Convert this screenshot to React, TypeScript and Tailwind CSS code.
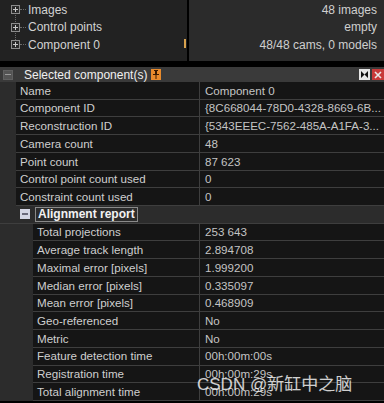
import React from 'react';

const font = { fontFamily: '"Liberation Sans", Arial, sans-serif' };

const topRows = [
  { label: 'Images', value: '48 images' },
  { label: 'Control points', value: 'empty' },
  { label: 'Component 0', value: '48/48 cams, 0 models' },
];

const mainRows = [
  ['Name', 'Component 0'],
  ['Component ID', '{8C668044-78D0-4328-8669-6B...'],
  ['Reconstruction ID', '{5343EEEC-7562-485A-A1FA-3...'],
  ['Camera count', '48'],
  ['Point count', '87 623'],
  ['Control point count used', '0'],
  ['Constraint count used', '0'],
];

const reportRows = [
  ['Total projections', '253 643'],
  ['Average track length', '2.894708'],
  ['Maximal error [pixels]', '1.999200'],
  ['Median error [pixels]', '0.335097'],
  ['Mean error [pixels]', '0.468909'],
  ['Geo-referenced', 'No'],
  ['Metric', 'No'],
  ['Feature detection time', '00h:00m:00s'],
  ['Registration time', '00h:00m:29s'],
  ['Total alignment time', '00h:00m:29s'],
];

const PlusBox = () => (
  <div className="w-[9px] h-[9px] border border-[#8c8c8c] bg-[#2a2a2a] flex items-center justify-center relative">
    <div className="absolute w-[5px] h-[1px] bg-[#c8c8c8]" />
    <div className="absolute w-[1px] h-[5px] bg-[#c8c8c8]" />
  </div>
);

const Row = ({ label, value, indent }: { label: string; value: string; indent: boolean }) => (
  <div className="flex h-[17.73px] bg-[#2c2c2c]">
    <div className={`${indent ? 'w-[33px]' : 'w-[16px]'} shrink-0`} />
    <div className="flex-1 flex border-b border-[#3e3e3e] bg-[#151515]">
      <div className={`${indent ? 'w-[166px] pl-[4px]' : 'w-[183px] pl-[4px]'} shrink-0 flex items-center text-[11.6px] text-[#cfcfcf] whitespace-nowrap overflow-hidden`}>
        {label}
      </div>
      <div className="flex-1 flex items-center border-l border-[#3e3e3e] pl-[5px] text-[11.6px] text-[#c4c4c4] whitespace-nowrap overflow-hidden">
        {value}
      </div>
    </div>
  </div>
);

export default function App() {
  return (
    <div className="w-[384px] h-[403px] bg-black overflow-hidden relative" style={font}>
      {/* tree panel */}
      <div className="flex h-[61px]">
        <div className="w-[187px] bg-[#222222] pt-[1px] relative">
          <div className="absolute left-[15px] top-[10px] h-[36px] border-l border-dotted border-[#6a6a6a]" />
          {topRows.map((r) => (
            <div key={r.label} className="flex items-center h-[17.5px] pl-[11px] relative">
              <PlusBox />
              <div className="w-[6px] border-t border-dotted border-[#6a6a6a] mr-[2px]" />
              <span className="text-[12px] text-[#d2d2d2]">{r.label}</span>
            </div>
          ))}
          <div className="absolute left-[184px] top-[39px] w-[2px] h-[9px] bg-[#d8a24e]" />
        </div>
        <div className="w-[2px] bg-black" />
        <div className="flex-1 bg-[#2b2b2b] pt-[1px] pr-[7px]">
          {topRows.map((r) => (
            <div key={r.value} className="h-[17.5px] flex items-center justify-end text-[12px] text-[#cfcfcf]">
              {r.value}
            </div>
          ))}
        </div>
      </div>
      <div className="h-[6px] bg-black" />

      {/* header */}
      <div className="h-[15px] bg-[#3a3a3a] flex items-center">
        <div className="ml-[3px] w-[10px] h-[10px] bg-[#545454] border border-[#606060] flex items-center justify-center">
          <div className="w-[6px] h-[1px] bg-[#9a9a9a]" />
        </div>
        <span className="ml-[11px] text-[12px] text-[#f0f0f0]">Selected component(s)</span>
        <div className="ml-[4px] w-[10px] h-[11px] bg-[#e88a2c] flex items-center justify-center">
          <svg width="8" height="9" viewBox="0 0 8 9">
            <rect x="2" y="0" width="4" height="1" fill="#3a1a00" />
            <rect x="3" y="1" width="2" height="3" fill="#3a1a00" />
            <rect x="1" y="4" width="6" height="1" fill="#3a1a00" />
            <rect x="3.5" y="5" width="1" height="4" fill="#3a1a00" />
          </svg>
        </div>
        <div className="flex-1" />
        <div className="w-[11px] h-[11px] bg-[#e6e6e6] flex items-center justify-center">
          <svg width="9" height="9" viewBox="0 0 9 9">
            <path d="M1 1 L4.5 4.5 L1 8 Z M8 1 L4.5 4.5 L8 8 Z" fill="#111" />
          </svg>
        </div>
        <div className="ml-[2px] w-[12px] h-[11px] bg-[#c83a3a] flex items-center justify-center">
          <svg width="8" height="8" viewBox="0 0 8 8">
            <path d="M1 1 L7 7 M7 1 L1 7" stroke="#e8e8e8" strokeWidth="1.6" />
          </svg>
        </div>
      </div>

      {/* property grid */}
      <div className="bg-[#2c2c2c]">
        {mainRows.map(([l, v]) => (
          <Row key={l} label={l} value={v} indent={false} />
        ))}
        <div className="flex items-center h-[17.73px] bg-[#2c2c2c] border-b border-[#3e3e3e]">
          <div className="ml-[20px] w-[10px] h-[10px] bg-[#d4d6e4] flex items-center justify-center">
            <div className="w-[6px] h-[2px] bg-[#6a6a7a]" />
          </div>
          <div className="ml-[5px] px-[2px] h-[15px] border border-[#8a8a8a] flex items-center text-[12px] font-bold text-[#f2f2f2]">
            Alignment report
          </div>
        </div>
        {reportRows.map(([l, v]) => (
          <Row key={l} label={l} value={v} indent={true} />
        ))}
      </div>

      {/* watermark */}
      <div
        className="absolute left-[197px] top-[372px] text-[17px] text-white/80 whitespace-nowrap"
        style={{ fontFamily: '"Liberation Sans", "Noto Sans CJK SC", sans-serif' }}
      >
        CSDN @新缸中之脑
      </div>
    </div>
  );
}
